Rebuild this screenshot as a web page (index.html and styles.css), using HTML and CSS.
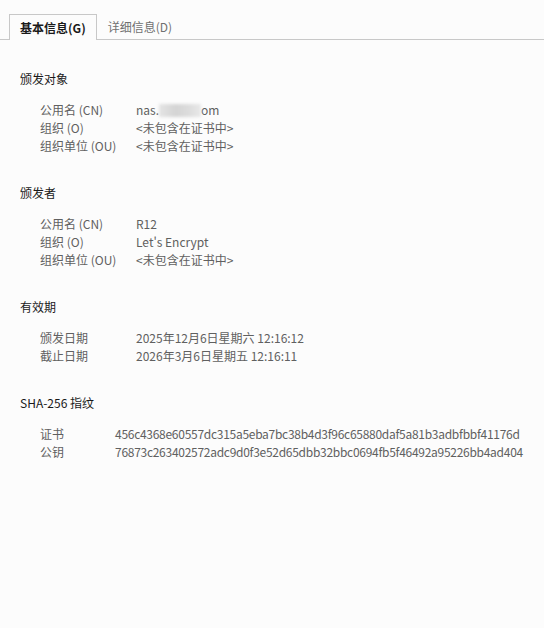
FILE: index.html
```html
<!DOCTYPE html>
<html lang="zh-CN">
<head>
    <meta charset="UTF-8">
    <meta name="viewport" content="width=device-width, initial-scale=1.0">
    <title>证书查看器</title>
    <link rel="stylesheet" href="styles.css">
</head>
<body>
    <div class="tabs">
        <div class="tab active">基本信息(G)</div>
        <div class="tab">详细信息(D)</div>
    </div>

    <div class="content">
        <div class="section">
            <div class="section-title">颁发对象</div>
            <div class="rows">
                <div class="row"><span class="label">公用名 (CN)</span><span class="value">nas.<span class="blurred"></span>om</span></div>
                <div class="row"><span class="label">组织 (O)</span><span class="value">&lt;未包含在证书中&gt;</span></div>
                <div class="row"><span class="label">组织单位 (OU)</span><span class="value">&lt;未包含在证书中&gt;</span></div>
            </div>
        </div>

        <div class="section">
            <div class="section-title">颁发者</div>
            <div class="rows">
                <div class="row"><span class="label">公用名 (CN)</span><span class="value">R12</span></div>
                <div class="row"><span class="label">组织 (O)</span><span class="value">Let's Encrypt</span></div>
                <div class="row"><span class="label">组织单位 (OU)</span><span class="value">&lt;未包含在证书中&gt;</span></div>
            </div>
        </div>

        <div class="section">
            <div class="section-title">有效期</div>
            <div class="rows">
                <div class="row"><span class="label">颁发日期</span><span class="value">2025年12月6日星期六 12:16:12</span></div>
                <div class="row"><span class="label">截止日期</span><span class="value">2026年3月6日星期五 12:16:11</span></div>
            </div>
        </div>

        <div class="section">
            <div class="section-title">SHA-256 指纹</div>
            <div class="rows narrow">
                <div class="row"><span class="label">证书</span><span class="value hash">456c4368e60557dc315a5eba7bc38b4d3f96c65880daf5a81b3adbfbbf41176d</span></div>
                <div class="row"><span class="label">公钥</span><span class="value hash">76873c263402572adc9d0f3e52d65dbb32bbc0694fb5f46492a95226bb4ad404</span></div>
            </div>
        </div>
    </div>
</body>
</html>
```

FILE: styles.css
```css
body {
    margin: 0;
    background-color: #fcfcfc;
    font-family: "Noto Sans CJK SC", "Noto Sans", sans-serif;
    font-size: 12px;
    line-height: 18px;
    color: #606060;
}

.tabs {
    display: flex;
    padding: 14px 0 0 9px;
    border-bottom: 1px solid #c8c8c8;
}

.tab {
    height: 23px;
    line-height: 24px;
    padding: 1px 11px 0 11px;
    color: #707070;
}

.tab.active {
    border: 1px solid #c8c8c8;
    border-bottom: none;
    margin-bottom: -1px;
    height: 24px;
    padding: 1px 10px 0 10px;
    font-weight: bold;
    color: #1a1a1a;
    background-color: #fcfcfc;
}

.content {
    padding: 30px 20px 0 20px;
}

.section {
    margin-bottom: 29px;
}

.section-title {
    color: #1a1a1a;
    margin-bottom: 13px;
}

.rows {
    padding-left: 20px;
}

.row {
    display: flex;
    white-space: nowrap;
}

.label {
    width: 96px;
    flex-shrink: 0;
}

.narrow .label {
    width: 75px;
}

.hash {
    letter-spacing: -0.28px;
}

.blurred {
    display: inline-block;
    width: 42px;
    height: 13px;
    vertical-align: -2px;
    background: linear-gradient(90deg, #e4e4e4, #d4d4d4 40%, #dcdcdc 70%, #e8e8e8);
    filter: blur(1.5px);
}
```
